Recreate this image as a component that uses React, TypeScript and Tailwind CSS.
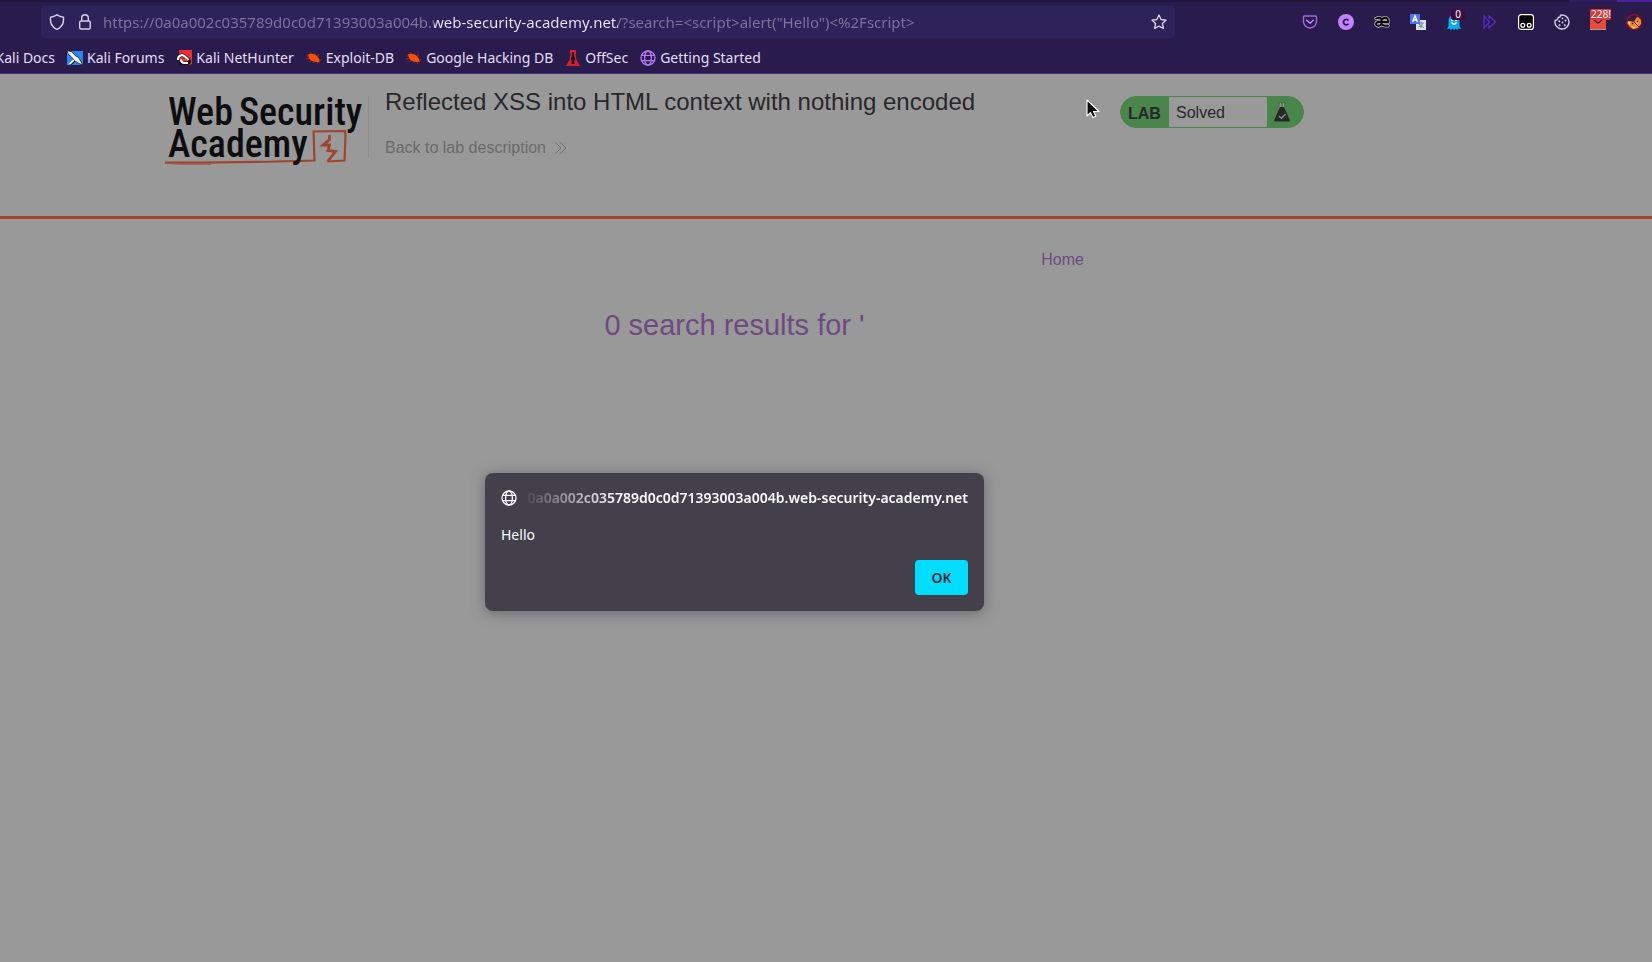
import type { ReactNode } from "react";

const URL_TEXT =
  'https://0a0a002c035789d0c0d71393003a004b.web-security-academy.net/?search=<script>alert("Hello")<%2Fscript>';

function Globe({ width = 1.3 }: { width?: number }) {
  return (
    <svg viewBox="0 0 16 16" className="size-4 shrink-0" fill="none" stroke="currentColor" strokeWidth={width}>
      <circle cx="8" cy="8" r="7" />
      <ellipse cx="8" cy="8" rx="3.4" ry="7" />
      <path d="M1.6 5.3h12.8M1.6 10.7h12.8" />
    </svg>
  );
}

function KaliForumsIcon() {
  return (
    <svg viewBox="0 0 16 16" className="size-4 shrink-0">
      <path d="M1 1h15v14H0V3z" fill="#2a83f5" />
      <path d="M.5.500l4.500 1.500 3 3.500 3.500 2 2.500 4 1.500 3.500-3.500-1.500-4-2.500-3.500-4L1 4z" fill="#fff" stroke="#111827" strokeWidth=".8" />
      <path d="M1 15l5-5 2.500 1.500L4.500 15z" fill="#111827" />
      <path d="M1 14.500l5-5 1.500 1-4 4z" fill="#fff" />
    </svg>
  );
}

function NetHunterIcon() {
  return (
    <svg viewBox="0 0 16 16" className="size-4 shrink-0">
      <path d="M3 0h13v14l-3 1-9-6z" fill="#ef2b32" />
      <path
        d="M2 9.500C2.500 5 6 4 9 6.500l4 4c1 2-1 3-3 2.800-3-.3-6 0-7 .7"
        fill="none" stroke="#111" strokeWidth="3.400"
      />
      <path
        d="M2 10C2 5 6 4 9 6.500l3.500 3.500M5 9.500q0 3 3 3.500h4"
        fill="none" stroke="#fff" strokeWidth="2.200"
      />
      <path d="M6.500 8.500l4 2" stroke="#ef2b32" strokeWidth="1.500" />
    </svg>
  );
}

function BugIcon() {
  return (
    <svg viewBox="0 0 16 16" className="size-4 shrink-0">
      <path
        d="M1 6h4M0 9l4-1M3 12l3-2M4 2l2 3M8 3l1 2M12 14l-1-3M8 13V10M14 12l-2-1M12 4v3M15 10h-2"
        stroke="#b8350f" strokeWidth=".8" fill="none"
      />
      <path d="M2 4.500C5 3 10 4 12.500 8c2 3 .5 4.500-2 4-4-.3-6.500-1.500-7.500-4z" fill="#ff4b00" />
    </svg>
  );
}

function OffSecIcon() {
  return (
    <svg viewBox="0 0 16 16" className="size-4 shrink-0">
      <path d="M5 0h6v3l-.5 1 1 6 3.500 6H1l3.500-6 1-6L5 3z" fill="#d92228" />
      <path d="M7 2h2v4l1.500 3-1 1v4h-3v-4l-1-1L7 6z" fill="#2a0d1c" />
    </svg>
  );
}

function Bookmark({ icon, children }: { icon: ReactNode; children: string }) {
  return (
    <a href="#" className="flex shrink-0 items-center gap-1">
      {icon}
      {children}
    </a>
  );
}

function Extension({ label, children }: { label: string; children: ReactNode }) {
  return (
    <button type="button" aria-label={label} className="relative size-4 shrink-0">
      {children}
    </button>
  );
}

function Extensions() {
  return (
    <div className="flex items-center gap-5">
      <Extension label="Pocket">
        <svg viewBox="0 0 16 16" className="size-4" fill="none" stroke="#a566e4" strokeWidth="1.400" strokeLinecap="round" strokeLinejoin="round">
          <path d="M2.500 2h11q1 0 1 1v4.500a6.500 6.500 0 0 1-13 0V3q0-1 1-1z" />
          <path d="M4.700 6.300L8 9.300l3.300-3" stroke="#c58fff" />
        </svg>
      </Extension>
      <Extension label="Account container">
        <svg viewBox="0 0 16 16" className="size-4">
          <circle cx="8" cy="8" r="8" fill="#c383fb" />
          <path d="M10.400 6.500A2.700 2.700 0 1 0 10.400 9.700" fill="none" stroke="#2a1a52" strokeWidth="1.800" />
        </svg>
      </Extension>
      <Extension label="Character map">
        <svg viewBox="0 0 16 16" className="size-4" fill="none" strokeLinecap="round">
          <g stroke="#b9b5b0" strokeWidth="3.400">
            <path d="M2 4.500Q6.500 2.500 7.500 5.500V8H4Q2 8.500 2 10T4.500 12Q7 11.500 7.500 9.500 8.500 12.500 14 11.700M7.500 8H14Q14.500 3.700 11 3.700 7.500 4 7.500 8" />
          </g>
          <g stroke="#08060e" strokeWidth="1.900">
            <path d="M2 4.500Q6.500 2.500 7.500 5.500V8H4Q2 8.500 2 10T4.500 12Q7 11.500 7.500 9.500 8.500 12.500 14 11.700M7.500 8H14Q14.500 3.700 11 3.700 7.500 4 7.500 8" />
          </g>
        </svg>
      </Extension>
      <Extension label="Translate">
        <svg viewBox="0 0 16 16" className="size-4" fill="none">
          <path d="M6 6h10v10H6z" fill="#dce3e6" />
          <path d="M8 9h6M11 7.500V14M8.500 13q4-.5 4.500-4M9 10q1 3 5 3.500" stroke="#6c98a5" />
          <path d="M0 0h10v10H0z" fill="#4a70f5" />
          <path d="M2.500 8L5 1.800 7.500 8M3.500 6h3" stroke="#fff" strokeWidth="1.400" />
        </svg>
      </Extension>
      <Extension label="Ghostery">
        <svg viewBox="0 0 16 16" className="size-4">
          <path d="M2.500 7a5.500 6.500 0 0 1 11 0v5l1.500 3-2.500-.5L11 16l-1.500-1.500L8 16l-1.500-1.500L5 16l-1.500-1.500L1 15l1.500-3z" fill="#00aef0" />
          <circle cx="6" cy="6" r="1.200" fill="#fff" />
          <circle cx="10" cy="6" r="1.200" fill="#fff" />
          <path d="M5.500 8.500Q8 12 10.500 8.500" stroke="#fff" fill="none" strokeWidth="1.300" />
        </svg>
        <span className="absolute -top-[5px] left-[5px] h-[11px] w-3.5 rounded-xs bg-[#3c0d3c] text-center text-[10px] leading-[11px] text-white">0</span>
      </Extension>
      <Extension label="Fast forward">
        <svg viewBox="0 0 16 16" className="size-4" fill="none" stroke="#5a2cc0" strokeWidth="1.300">
          <path d="M2 2l5.500 6L2 14zM7 5V2l6.500 6L7 14v-3" />
        </svg>
      </Extension>
      <Extension label="Tampermonkey">
        <svg viewBox="0 0 16 16" className="size-4">
          <rect x=".6" y=".6" width="14.800" height="14.800" rx="2.500" fill="#000" stroke="#fff" strokeWidth="1.200" />
          <g fill="#000" stroke="#fff" strokeWidth="1.300">
            <circle cx="4.800" cy="11.200" r="1.900" />
            <circle cx="11.200" cy="11.200" r="1.900" />
          </g>
        </svg>
      </Extension>
      <Extension label="Cookie editor">
        <svg viewBox="0 0 16 16" className="size-4">
          <path d="M6.500 1.200Q6.500 3.500 4.300 3.500 4 5.700 1.200 6.500A7 7 0 1 0 6.500 1.200z" fill="none" stroke="#d6cfe8" strokeWidth="1.400" />
          <g fill="#d6cfe8">
            <circle cx="8.500" cy="4.300" r=".9" />
            <circle cx="5.300" cy="7.200" r="1" />
            <circle cx="11.500" cy="6.500" r="1" />
            <circle cx="8.500" cy="8.500" r=".9" />
            <circle cx="5.500" cy="11.200" r="1" />
            <circle cx="10.800" cy="11.300" r="1" />
          </g>
        </svg>
      </Extension>
      <Extension label="Mail">
        <svg viewBox="0 0 16 16" className="size-4">
          <path d="M0 0h16v15H0z" fill="#e94b3b" />
          <path d="M4 6l4 3 4-3" fill="none" stroke="#55203f" strokeWidth="1.500" />
          <path d="M0 15h16v1H0z" fill="#a29b96" />
        </svg>
        <span className="absolute -top-[5px] left-0 h-[11px] rounded-xs bg-[#d9383a] pl-px text-left text-[10px] leading-[11px] text-white">228!</span>
      </Extension>
      <Extension label="Proxy switcher">
        <svg viewBox="0 0 16 16" className="size-4">
          <circle cx="8" cy="8" r="7.300" fill="none" stroke="#a80b12" strokeWidth="1.200" />
          <path d="M1 9l3-2 4 1 2-4 2-1 3 3v4l-3 4-5 1-3-2z" fill="#ef8b1c" />
          <path d="M1.500 7l3 1-1 3zM9 9.500l3-1.500-1 4zM5 12l3 1 2-1-2 3z" fill="#f7dfb0" />
          <path d="M6 9l1 1M11 7l1 1" stroke="#2a1440" strokeWidth="1.200" />
          <path d="M3 3l10 10" stroke="#b80b12" strokeWidth="1" />
        </svg>
      </Extension>
    </div>
  );
}

function BrowserChrome() {
  return (
    <header className="border-b border-[#41307c] bg-[#291c4d] font-['Noto_Sans',sans-serif] text-[14px] text-[#e6dcfa]">
      <div className="flex h-0.5 justify-end bg-[#22163f]">
        <div className="w-12 bg-[#311b67]" />
        <div className="w-[35px] bg-[#4b209a]" />
      </div>
      <div className="flex items-center gap-[127px] pt-1 pr-2.5 pl-[41px]">
        <div className="flex h-8 min-w-0 flex-1 items-center rounded-sm bg-[#2d235a] px-2">
          <svg viewBox="0 0 16 16" className="size-4 shrink-0" fill="none" stroke="#d8d0ec" strokeWidth="1.400" strokeLinejoin="round">
            <path d="M8 .8Q11 2.500 14.500 3.200 15 9.500 12 12.500 10 14.700 8 15.300 6 14.700 4 12.500 1 9.500 1.500 3.200 5 2.500 8 .8z" />
          </svg>
          <svg viewBox="0 0 16 16" className="ml-3 size-4 shrink-0" fill="none" stroke="#d8d0ec" strokeWidth="1.400">
            <rect x="2.700" y="7" width="10.600" height="8" rx="1.500" />
            <path d="M4.700 7V4a3.300 3.300 0 0 1 6.600 0v3" />
          </svg>
          <input
            aria-label="Address"
            defaultValue={URL_TEXT}
            spellCheck={false}
            className="ml-2.5 h-6 min-w-0 flex-1 bg-[linear-gradient(90deg,#7d739c_331px,#ece6fa_331px,#ece6fa_515px,#7d739c_515px)] bg-clip-text text-[15px] text-transparent outline-none"
          />
          <button type="button" aria-label="Bookmark this page" className="size-4 shrink-0">
            <svg viewBox="0 0 16 16" className="size-4" fill="none" stroke="#dcd5ee" strokeWidth="1.300" strokeLinejoin="round">
              <path d="M8 1l2.100 4.500 5 .6-3.700 3.400 1 5L8 12.100l-4.400 2.400 1-5L.9 6.100l5-.6z" />
            </svg>
          </button>
        </div>
        <Extensions />
      </div>
      <nav aria-label="Bookmarks" className="flex h-[35px] items-center gap-3 overflow-hidden pt-1">
        <a href="#" className="flex w-[55px] shrink-0 justify-end whitespace-nowrap">Kali Docs</a>
        <Bookmark icon={<KaliForumsIcon />}>Kali Forums</Bookmark>
        <Bookmark icon={<NetHunterIcon />}>Kali NetHunter</Bookmark>
        <Bookmark icon={<BugIcon />}>Exploit-DB</Bookmark>
        <Bookmark icon={<BugIcon />}>Google Hacking DB</Bookmark>
        <Bookmark icon={<OffSecIcon />}>OffSec</Bookmark>
        <Bookmark icon={<span className="text-[#b878f5]"><Globe /></span>}>Getting Started</Bookmark>
      </nav>
    </header>
  );
}

function AcademyLogo() {
  return (
    <a href="#" aria-label="Web Security Academy" className="relative block h-[72px] w-[202px] shrink-0">
      <svg viewBox="0 0 202 72" className="absolute inset-0 size-full" fill="none" stroke="#a0452b" strokeWidth="2.200">
        <path d="M0 66.500Q60 67 149.500 64.500L148.600 35.500 180 35 180.500 39 179.500 64.500 162.500 65.500" />
        <path d="M162.500 65.500L170.500 55.500 163 54.500 164.500 49 158 49 164.500 43.500V39" strokeWidth="2.800" />
        <path d="M2 67.500Q20 69 46 68.500" strokeWidth=".6" />
      </svg>
      <span className="relative flex flex-col pl-[3px] font-['Roboto_Condensed','Roboto',sans-serif] text-[38px] leading-8 font-medium text-[#0d0d0f]">
        <span className="flex gap-1.5"><span>Web</span><span>Security</span></span>
        <span>Academy</span>
      </span>
    </a>
  );
}

function LabStatus() {
  return (
    <div className="flex h-8 w-[184px] shrink-0 overflow-hidden rounded-full border border-[#4a854c] bg-[#4a854c] text-[16px] leading-[30px] text-[#28282a]">
      <span className="w-12 pt-0.5 pl-[7px] font-bold">LAB</span>
      <span className="flex-1 bg-[#99999a] pt-px pl-[7px]">Solved</span>
      <span className="flex w-9 items-center pl-1.5">
        <svg viewBox="0 0 18 20" className="h-5 w-[18px] shrink-0">
          <path d="M5.500 1h7" stroke="#59635a" strokeWidth="1.500" />
          <path d="M7.500 1v5M10.500 1v5" stroke="#8f9890" strokeWidth="1.200" />
          <path d="M7 5h4l5.800 13q.4 1.500-1 1.500H2.200q-1.400 0-1-1.500z" fill="#28282a" />
          <path d="M6 14l2.500 2.300 4-4.300" fill="none" stroke="#8b938b" strokeWidth="1.300" />
        </svg>
      </span>
    </div>
  );
}

function AlertDialog() {
  return (
    <div
      role="alertdialog"
      aria-labelledby="dialog-origin"
      aria-describedby="dialog-message"
      className="flex w-[499px] flex-col rounded-lg bg-[#43404c] px-4 pt-[15px] pb-4 font-['Noto_Sans',sans-serif] text-[14px] leading-5 text-[#fbfbfe] shadow-[0_2px_14px_rgba(58,57,68,0.5)]"
    >
      <div className="flex items-center gap-1">
        <Globe />
        <div className="flex min-w-0 flex-1 justify-end overflow-hidden mask-[linear-gradient(90deg,transparent,black_96px)]">
          <h2 id="dialog-origin" className="font-semibold whitespace-nowrap">
            0a0a002c035789d0c0d71393003a004b.web-security-academy.net
          </h2>
        </div>
      </div>
      <p id="dialog-message" className="mt-[17px]">Hello</p>
      <button type="button" className="mt-[15px] h-[35px] w-[53px] self-end rounded-sm bg-[#00ddff] font-semibold text-[#2b2a33]">
        OK
      </button>
    </div>
  );
}

export default function App() {
  return (
    <div className="flex min-h-screen flex-col bg-[#99999a] font-['Liberation_Sans',Arial,sans-serif] text-[16px]">
      <BrowserChrome />
      <main className="relative flex-1">
        <section className="border-b-3 border-[#a0452b] pr-[183px]">
          <div className="mx-auto flex h-[142px] max-w-[1139px] items-start pt-[22px]">
            <AcademyLogo />
            <div className="ml-px h-[62px] w-px bg-[#8c8c8d]" />
            <div className="ml-4 flex-1">
              <h1 className="-mt-2 text-[24px] leading-7 text-[#28282a]">
                Reflected XSS into HTML context with nothing encoded
              </h1>
              <a href="#" className="mt-[22px] flex items-center gap-2 leading-5 text-[#6a6a6b]">
                Back to lab description
                <svg viewBox="0 0 14 14" className="size-3.5" fill="none" stroke="currentColor" strokeWidth=".8">
                  <path d="M1 1l6 6-6 6M6 1l6 6-6 6" />
                </svg>
              </a>
            </div>
            <LabStatus />
          </div>
        </section>
        <section className="pr-[183px] text-[#6f4a80]">
          <div className="mx-auto flex max-w-[699px] flex-col pt-[31px]">
            <a href="#" className="self-end leading-5">Home</a>
            <h2 className="mt-[35px] text-center text-[29px] leading-10">0 search results for '</h2>
          </div>
        </section>
        <div className="absolute inset-x-0 top-[399px] flex justify-center pr-[183px]">
          <AlertDialog />
        </div>
        <svg viewBox="0 0 14 20" className="absolute top-[25px] left-[1086px] h-5 w-3.5">
          <path d="M1 1v16l3.500-3.300L7 18.500l2.800-1.300L7.500 12.500H13z" fill="#0b0b0c" stroke="#fff" strokeWidth="1.100" strokeLinejoin="round" />
        </svg>
      </main>
    </div>
  );
}
